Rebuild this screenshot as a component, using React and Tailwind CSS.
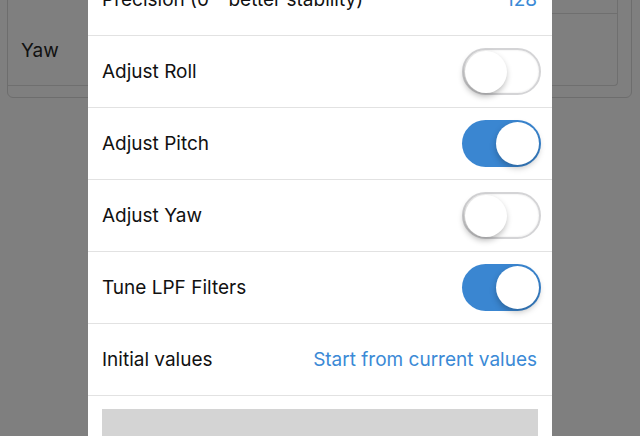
import React from "react";

const ROWS = [
  { label: "Adjust Roll", on: false },
  { label: "Adjust Pitch", on: true },
  { label: "Adjust Yaw", on: false },
  { label: "Tune LPF Filters", on: true },
];

function Toggle({ on }) {
  if (on) {
    return (
      <div className="w-[79px] h-[47px] rounded-full bg-[#3a86d1] flex items-center justify-end pr-[2px]">
        <div className="w-[43px] h-[43px] rounded-full bg-white shadow-[0_3px_6px_rgba(0,0,0,0.25)]" />
      </div>
    );
  }
  return (
    <div className="w-[79px] h-[47px] rounded-full bg-white border-2 border-[#d4d4d6] flex items-center pl-[1px] shadow-[inset_0_0_2px_rgba(0,0,0,0.12)]">
      <div className="w-[42px] h-[42px] rounded-full bg-white shadow-[-1px_3px_6px_rgba(0,0,0,0.3)]" />
    </div>
  );
}

export default function App() {
  return (
    <div
      className="relative w-[640px] h-[436px] overflow-hidden bg-[#7f7f7f]"
      style={{ fontFamily: "Inter, 'Noto Sans', sans-serif" }}
    >
      {/* Card behind the overlay */}
      <div className="mt-[-20px] ml-[7px] mr-[8px] h-[118px] border border-[#6d6d6d] rounded-b-md pr-[13px] pb-[11px]">
        <div className="h-full border-r border-b border-[#6f6f6f] rounded-br-sm pt-[32px]">
          <div className="border-t border-[#6f6f6f] ml-[540px]" />
          <div className="h-[72px] flex items-center pl-[13px] pt-[2px] text-[19px] text-[#111]">
            Yaw
          </div>
        </div>
      </div>

      {/* Modal sheet */}
      <div className="absolute left-[88px] top-0 w-[464px] h-[436px] bg-white text-[19px]">
        <div className="mt-[-36px]">
          <div className="h-[72px] flex items-center justify-between pl-[14px] pr-[15px] pt-[2px] border-b border-[#e2e2e2]">
            <span className="text-[#111]">Precision (0 - better stability)</span>
            <span className="text-[#3b8ad6]">128</span>
          </div>
          {ROWS.map((r) => (
            <div
              key={r.label}
              className="h-[72px] flex items-center justify-between pl-[14px] pr-[11px] border-b border-[#e2e2e2]"
            >
              <span className="text-[#111] pt-[2px]">{r.label}</span>
              <Toggle on={r.on} />
            </div>
          ))}
          <div className="h-[72px] flex items-center justify-between pl-[14px] pr-[15px] pt-[2px] border-b border-[#e2e2e2]">
            <span className="text-[#111]">Initial values</span>
            <span className="text-[#3b8ad6]">Start from current values</span>
          </div>
          <div className="px-[14px] pt-[13px]">
            <div className="h-[60px] bg-[#d4d4d4]" />
          </div>
        </div>
      </div>
    </div>
  );
}
